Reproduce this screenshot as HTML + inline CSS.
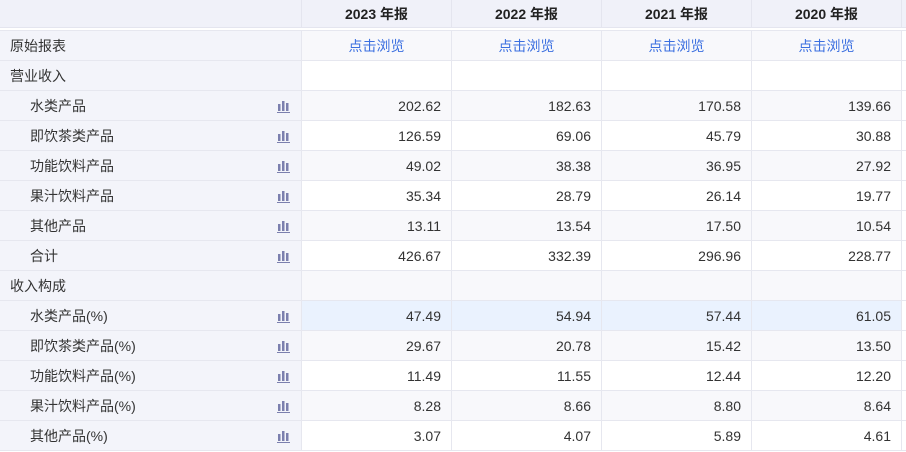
<!DOCTYPE html>
<html><head><meta charset="utf-8"><style>
*{margin:0;padding:0;box-sizing:border-box}
body{width:906px;height:452px;overflow:hidden;background:#fff;font-family:"Liberation Sans","Noto Sans CJK SC",sans-serif;font-size:14px;color:#333}
.hd{position:absolute;top:0;left:0;width:906px;height:28px;background:#f0f1f9;border-bottom:1px solid #e4e5ef}
.hd div{position:absolute;top:0;height:27px;line-height:28px;text-align:center;font-weight:bold;font-size:14px;color:#222;border-left:1px solid #e4e5ef}
.row{position:absolute;left:0;width:906px;height:30px;border-bottom:1px solid #e6e7ef}
.row div{position:absolute;top:0;height:29px;line-height:30px}
.lab{left:0;width:301px;background:#f3f4fa;padding-left:10px}
.sub{padding-left:30px}
.c{width:150px;border-left:1px solid #e6e7ef;text-align:right;padding-right:10px}
.lk{color:#3b6fe0;text-align:center;padding-right:0}
.ic{position:absolute;left:277px;top:9px}
.odd .c{background:#f8f8fb}
.hl .c{background:#eaf2fe}
.edge{border-left:1px solid #e6e7ef;width:5px}
</style></head><body>
<div class="hd"><div style="left:301px;width:150px">2023 年报</div><div style="left:451px;width:150px">2022 年报</div><div style="left:601px;width:150px">2021 年报</div><div style="left:751px;width:150px">2020 年报</div><div style="left:901px;width:5px"></div></div>
<div style="position:absolute;top:28px;left:0;width:906px;height:3px;background:#fff;border-bottom:1px solid #e6e7ef"></div>
<div id="t"></div>
<script>
var rows=[
["原始报表",0,["点击浏览","点击浏览","点击浏览","点击浏览"],1],
["营业收入",0,["","","",""]],
["水类产品",1,["202.62","182.63","170.58","139.66"]],
["即饮茶类产品",1,["126.59","69.06","45.79","30.88"]],
["功能饮料产品",1,["49.02","38.38","36.95","27.92"]],
["果汁饮料产品",1,["35.34","28.79","26.14","19.77"]],
["其他产品",1,["13.11","13.54","17.50","10.54"]],
["合计",1,["426.67","332.39","296.96","228.77"]],
["收入构成",0,["","","",""]],
["水类产品(%)",1,["47.49","54.94","57.44","61.05"]],
["即饮茶类产品(%)",1,["29.67","20.78","15.42","13.50"]],
["功能饮料产品(%)",1,["11.49","11.55","12.44","12.20"]],
["果汁饮料产品(%)",1,["8.28","8.66","8.80","8.64"]],
["其他产品(%)",1,["3.07","4.07","5.89","4.61"]]];
var ic='<svg class="ic" width="14" height="13" viewBox="0 0 14 13"><rect x="1" y="4" width="2.5" height="7" fill="#7b7fae"/><rect x="5" y="1" width="2.5" height="10" fill="#7b7fae"/><rect x="9" y="3" width="2.5" height="8" fill="#7b7fae"/><rect x="0" y="12" width="13" height="1" fill="#7b7fae"/></svg>';
var h='';
rows.forEach(function(r,i){
 var cls='row'+(i%2==0?' odd':'')+(i==9?' hl':'');
 h+='<div class="'+cls+'" style="top:'+(31+i*30)+'px"><div class="lab'+(r[1]?' sub':'')+'">'+r[0]+(r[1]?ic:'')+'</div>';
 r[2].forEach(function(v,j){h+='<div class="c'+(r[3]?' lk':'')+'" style="left:'+(301+j*150)+'px">'+v+'</div>';});
 h+='<div class="edge" style="left:901px"></div></div>';
});
document.getElementById('t').innerHTML=h;
</script>
</body></html>
